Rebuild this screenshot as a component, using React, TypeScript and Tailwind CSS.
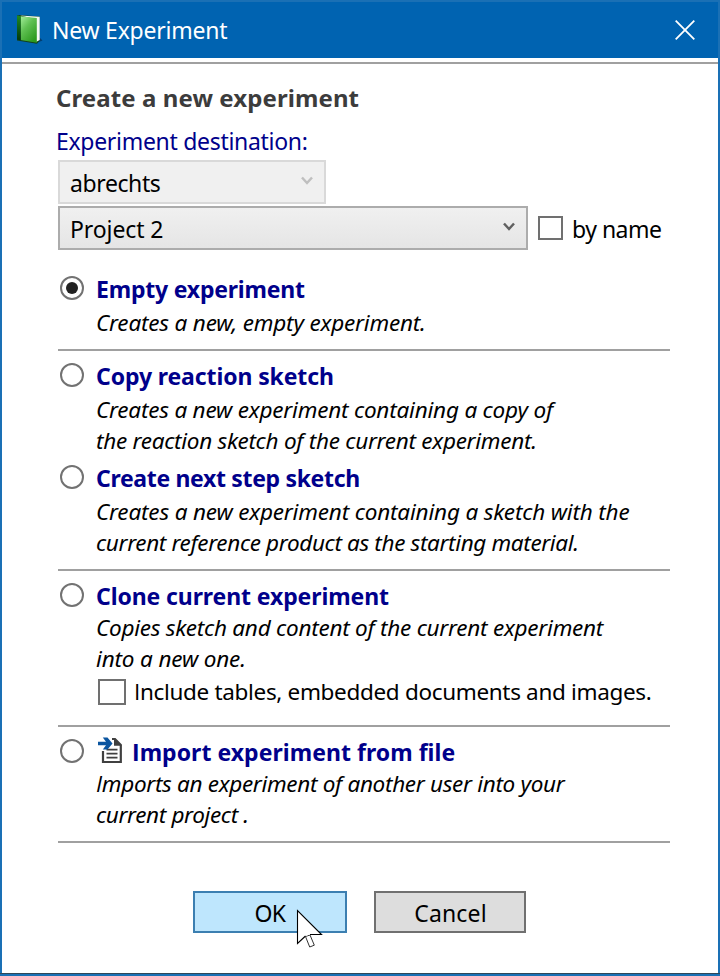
import type { ReactNode } from 'react';

// Capital I without slab serifs, taken from the sibling family.
const PlainI = () => <span className="font-['Open_Sans',sans-serif]">I</span>;

const Divider = ({ className = '' }: { className?: string }) => (
  <div className={`h-[2px] w-[612px] bg-[#a0a0a0] ${className}`} />
);

function Radio({ checked = false }: { checked?: boolean }) {
  return (
    <span
      role="radio"
      aria-checked={checked}
      className="mt-[2px] ml-[2px] flex size-[24px] shrink-0 items-center justify-center rounded-full border-2 border-[#727272] bg-white"
    >
      {checked && <span className="size-[12px] rounded-full bg-[#222]" />}
    </span>
  );
}

function Option({
  title,
  tracking,
  checked,
  icon,
  className = '',
  children,
}: {
  title: ReactNode;
  tracking: string;
  checked?: boolean;
  icon?: ReactNode;
  className?: string;
  children: ReactNode;
}) {
  return (
    <section className={`flex ${className}`}>
      <Radio checked={checked} />
      <div className="ml-[12px] flex flex-col">
        <div className="flex h-[31px] items-start">
          {icon}
          <span className={`whitespace-nowrap text-[23px] leading-[31px] font-bold text-[#00008b] ${tracking}`}>{title}</span>
        </div>
        {children}
      </div>
    </section>
  );
}

function Line({ className, children }: { className: string; children: ReactNode }) {
  return <p className={`h-[31px] text-[22.5px] leading-[31px] whitespace-nowrap italic ${className}`}>{children}</p>;
}

function Chevron({ className }: { className: string }) {
  return (
    <svg width="12" height="10" viewBox="0 0 12 10" fill="none" className={className}>
      <path d="M1 1.5 6 7 11 1.5" stroke="currentColor" strokeWidth="2.5" />
    </svg>
  );
}

function BookIcon() {
  return (
    <svg width="28" height="32" viewBox="0 0 28 32">
      <defs>
        <linearGradient id="cover" x1="0" y1="0" x2="0.7" y2="1">
          <stop offset="0" stopColor="#a4ef9c" />
          <stop offset="0.45" stopColor="#5fc052" />
          <stop offset="1" stopColor="#2c9a1d" />
        </linearGradient>
        <linearGradient id="spine" x1="0" y1="0" x2="0" y2="1">
          <stop offset="0" stopColor="#1f8a22" />
          <stop offset="1" stopColor="#03380c" />
        </linearGradient>
      </defs>
      <path d="M20 29.500 27.500 26.500 24 23Z" fill="#043d6d" />
      <path d="M2 1.500 5 1 24.500 2.500V26.500L22 29.800 2 26.500Z" fill="#12421c" />
      <path d="M5 1.500 24.700 2.800V26L21 28 20 5Z" fill="#f4f9f3" />
      <path d="M5.500 2.300 21.800 4V28.800L5.500 26Z" fill="url(#cover)" />
      <path d="M2 1.500 5.800 2.300V26.200L2 25.500Z" fill="url(#spine)" />
    </svg>
  );
}

function ImportIcon() {
  return (
    <svg width="26" height="27" viewBox="0 0 26 27" className="ml-[2px] mr-[8px] shrink-0" fill="none">
      <path d="M14 2H17L22.800 8V25H5V14" stroke="#404040" strokeWidth="2.200" />
      <path d="M16 1 23.900 8.800H16Z" fill="#404040" />
      <path d="M8.500 12.700H19.500M8.500 16.700H19.500M8.500 20.700H19.500" stroke="#404040" strokeWidth="1.700" />
      <path d="M0 4.700H8L4.800 0.600H9.500L14.500 6.500 9.500 12.400H4.800L8 8.300H0Z" fill="#0b55a0" />
    </svg>
  );
}

export default function App() {
  return (
    <div className="flex h-[976px] w-[720px] flex-col border-x-2 border-t-2 border-[#1a70b5] bg-white font-['Noto_Sans','Open_Sans',sans-serif] text-[23px] leading-[31px] text-black">
      <header className="flex h-[56px] shrink-0 items-center bg-[#0063b1] text-white">
        <div className="mt-[-1px] ml-[13px]">
          <BookIcon />
        </div>
        <span className="ml-[9px] whitespace-nowrap tracking-[-0.24px]">New Experiment</span>
        <svg width="20" height="20" viewBox="0 0 20 20" className="mt-[-1px] mr-[23px] ml-auto" stroke="#fff" strokeWidth="1.800">
          <path d="M0.700 0.700 19.300 19.300M19.300 0.700 0.700 19.300" />
        </svg>
      </header>
      <div className="mt-[4px] h-[2px] shrink-0 bg-[#a0a0a0]" />

      <main className="flex flex-col pl-[56px]">
        <h1 className="mt-[18px] -ml-[2px] h-[32px] text-[24px] leading-[32px] font-bold tracking-[0.09px] whitespace-nowrap text-[#3c3c3c]">
          Create a new experiment
        </h1>
        <p className="mt-[12px] -ml-[2px] h-[31px] tracking-[-0.3px] whitespace-nowrap text-[#00008b]">Experiment destination:</p>

        <div className="mt-[3px] flex h-[44px] w-[268px] items-center border-2 border-[#d9d9d9] bg-[#f0f0f0] pl-[10px]">
          <span className="mt-[3px] tracking-[-0.4px]">abrechts</span>
          <Chevron className="mr-[11px] -mt-[2px] ml-auto text-[#bfbfbf]" />
        </div>
        <div className="mt-[2px] flex h-[44px] items-center">
          <div className="flex h-[44px] w-[470px] items-center border-2 border-[#acacac] bg-linear-to-b from-[#f0f0f0] to-[#e5e5e5] pl-[10px]">
            <span className="mt-[3px] tracking-[-0.1px]">Project 2</span>
            <Chevron className="mr-[11px] -mt-[2px] ml-auto text-[#606060]" />
          </div>
          <span className="ml-[10px] h-[24px] w-[25px] border-2 border-[#707070]" />
          <span className="mt-[2px] ml-[9px] tracking-[-0.5px] whitespace-nowrap">by name</span>
        </div>

        <Option checked title="Empty experiment" tracking="tracking-[-0.2px]" className="mt-[24px]">
          <Line className="mt-[2px] tracking-[-0.18px]">Creates a new, empty experiment.</Line>
        </Option>
        <Divider className="mt-[11px]" />

        <Option title="Copy reaction sketch" tracking="tracking-[-0.11px]" className="mt-[10px]">
          <Line className="mt-[2px] tracking-[-0.2px]">Creates a new experiment containing a copy of</Line>
          <Line className="tracking-[-0.27px]">the reaction sketch of the current experiment.</Line>
        </Option>
        <Option title="Create next step sketch" tracking="tracking-[-0.33px]" className="mt-[7px]">
          <Line className="mt-[2px] tracking-[-0.17px]">Creates a new experiment containing a sketch with the</Line>
          <Line className="tracking-[-0.35px]">current reference product as the starting material.</Line>
        </Option>
        <Divider className="mt-[11px]" />

        <Option title="Clone current experiment" tracking="tracking-[-0.1px]" className="mt-[10px]">
          <Line className="tracking-[-0.24px]">Copies sketch and content of the current experiment</Line>
          <Line className="tracking-[-0.15px]">into a new one.</Line>
          <div className="mt-[2px] ml-[2px] flex h-[31px] items-center">
            <span className="h-[26px] w-[28px] border-2 border-[#707070]" />
            <span className="ml-[8px] text-[22.5px] tracking-[-0.33px] whitespace-nowrap">
              <PlainI />nclude tables, embedded documents and images.
            </span>
          </div>
        </Option>
        <Divider className="mt-[18px]" />

        <Option
          icon={<ImportIcon />}
          title={<><PlainI />mport experiment from file</>}
          tracking="tracking-[0.04px]"
          className="mt-[10px]"
        >
          <Line className="tracking-[-0.31px]"><PlainI />mports an experiment of another user into your</Line>
          <Line className="tracking-[-0.36px]">current project .</Line>
        </Option>
        <Divider className="mt-[11px]" />

        <footer className="mt-[48px] ml-[135px] flex gap-[27px]">
          <button className="relative flex h-[42px] w-[154px] items-center justify-center border-2 border-[#3c7fb1] bg-[#bee6fd] pt-[2px] tracking-[-0.7px]">
            OK
            <svg width="27" height="40" viewBox="0 0 27 40" className="absolute top-[16px] left-[101px]" fill="#fff" stroke="#000">
              <path d="M14 26 18.300 36.200 13.700 38 9.500 27.500Z" strokeWidth="1" stroke="#333" />
              <path d="M9.500 27 1.500 34.500V1.500L25.500 25.500H14" strokeWidth="1.100" />
            </svg>
          </button>
          <button className="flex h-[42px] w-[152px] items-center justify-center border-2 border-[#707070] bg-[#ddd] pt-[2px] pl-[1px] tracking-[0.15px]">
            Cancel
          </button>
        </footer>
      </main>
      <div className="-mx-[2px] mt-auto h-[3px] shrink-0 border-t border-[#30485a] bg-[#1a70b5]" />
    </div>
  );
}
